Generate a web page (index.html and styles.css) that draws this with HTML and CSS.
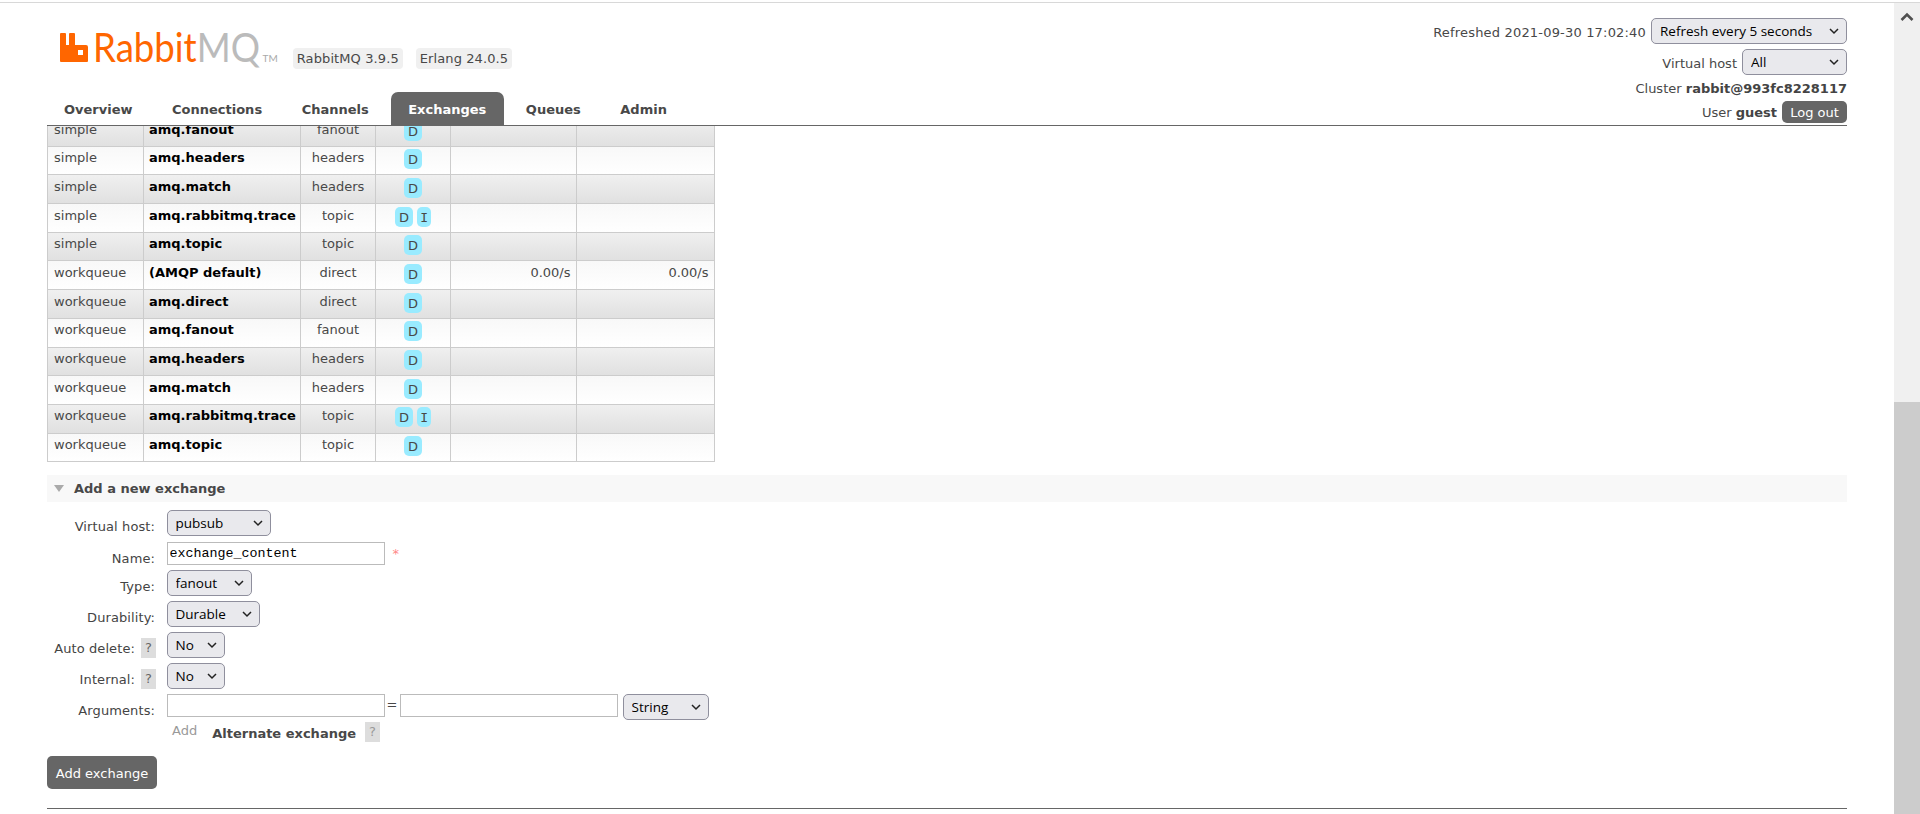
FILE: index.html
```html
<!DOCTYPE html>
<html lang="en">
<head>
<meta charset="utf-8">
<title>RabbitMQ Management</title>
<link rel="stylesheet" href="styles.css">
</head>
<body>
<div class="page">
  <div class="content">
    <header class="header">
      <div class="brand-col">
        <div class="brand">
          <svg class="logo-icon" viewBox="0 0 28 29" width="28" height="29" aria-hidden="true"><path fill="#f60" fill-rule="evenodd" d="M1 0h4a1 1 0 0 1 1 1v11h3V1a1 1 0 0 1 1-1h4a1 1 0 0 1 1 1v11h11a2 2 0 0 1 2 2v14a1 1 0 0 1-1 1H1a1 1 0 0 1-1-1V1a1 1 0 0 1 1-1zM18 17v5h5v-5z"/></svg>
          <span class="logo-text"><span class="logo-rabbit">Rabbit</span><span class="logo-mq">MQ</span></span>
          <span class="logo-tm">TM</span>
          <span class="pill pill-first">RabbitMQ 3.9.5</span>
          <span class="pill">Erlang 24.0.5</span>
        </div>
        <nav class="tabs">
          <a class="tab">Overview</a>
          <a class="tab">Connections</a>
          <a class="tab">Channels</a>
          <a class="tab tab-active">Exchanges</a>
          <a class="tab">Queues</a>
          <a class="tab">Admin</a>
        </nav>
      </div>
      <div class="status">
        <div class="status-row status-refresh">
          <span class="status-text">Refreshed 2021-09-30 17:02:40</span>
          <select class="sel sel-refresh"><option>Refresh every 5 seconds</option></select>
        </div>
        <div class="status-row status-vhost">
          <span class="status-text">Virtual host</span>
          <select class="sel sel-vhost"><option>All</option></select>
        </div>
        <div class="status-row status-cluster"><span class="status-text">Cluster <b>rabbit@993fc8228117</b></span></div>
        <div class="status-row status-user">
          <span class="status-text">User <b>guest</b></span>
          <button class="logout" type="button">Log out</button>
        </div>
      </div>
    </header>

    <main class="main">
      <table class="list">
        <colgroup>
          <col class="c1"><col class="c2"><col class="c3"><col class="c4"><col class="c5"><col class="c6">
        </colgroup>
        <tbody>
          <tr class="alt1"><td>simple</td><td class="name">amq.fanout</td><td class="ctr">fanout</td><td class="ctr"><span class="tag">D</span></td><td></td><td></td></tr>
          <tr class="alt2"><td>simple</td><td class="name">amq.headers</td><td class="ctr">headers</td><td class="ctr"><span class="tag">D</span></td><td></td><td></td></tr>
          <tr class="alt1"><td>simple</td><td class="name">amq.match</td><td class="ctr">headers</td><td class="ctr"><span class="tag">D</span></td><td></td><td></td></tr>
          <tr class="alt2"><td>simple</td><td class="name">amq.rabbitmq.trace</td><td class="ctr">topic</td><td class="ctr"><span class="tag">D</span> <span class="tag tag-i">I</span></td><td></td><td></td></tr>
          <tr class="alt1"><td>simple</td><td class="name">amq.topic</td><td class="ctr">topic</td><td class="ctr"><span class="tag">D</span></td><td></td><td></td></tr>
          <tr class="alt2"><td>workqueue</td><td class="name">(AMQP default)</td><td class="ctr">direct</td><td class="ctr"><span class="tag">D</span></td><td class="num">0.00/s</td><td class="num">0.00/s</td></tr>
          <tr class="alt1"><td>workqueue</td><td class="name">amq.direct</td><td class="ctr">direct</td><td class="ctr"><span class="tag">D</span></td><td></td><td></td></tr>
          <tr class="alt2"><td>workqueue</td><td class="name">amq.fanout</td><td class="ctr">fanout</td><td class="ctr"><span class="tag">D</span></td><td></td><td></td></tr>
          <tr class="alt1"><td>workqueue</td><td class="name">amq.headers</td><td class="ctr">headers</td><td class="ctr"><span class="tag">D</span></td><td></td><td></td></tr>
          <tr class="alt2"><td>workqueue</td><td class="name">amq.match</td><td class="ctr">headers</td><td class="ctr"><span class="tag">D</span></td><td></td><td></td></tr>
          <tr class="alt1"><td>workqueue</td><td class="name">amq.rabbitmq.trace</td><td class="ctr">topic</td><td class="ctr"><span class="tag">D</span> <span class="tag tag-i">I</span></td><td></td><td></td></tr>
          <tr class="alt2"><td>workqueue</td><td class="name">amq.topic</td><td class="ctr">topic</td><td class="ctr"><span class="tag">D</span></td><td></td><td></td></tr>
        </tbody>
      </table>

      <section class="section">
        <h2 class="section-title"><span class="triangle"></span>Add a new exchange</h2>
        <form class="form">
          <div class="row row-first">
            <label class="lbl">Virtual host:</label>
            <select class="sel sel-w-vhost"><option>pubsub</option></select>
          </div>
          <div class="row row-name">
            <label class="lbl">Name:</label>
            <input class="field" type="text" value="exchange_content">
            <span class="req">*</span>
          </div>
          <div class="row">
            <label class="lbl">Type:</label>
            <select class="sel sel-w-type"><option>fanout</option></select>
          </div>
          <div class="row">
            <label class="lbl">Durability:</label>
            <select class="sel sel-w-dur"><option>Durable</option></select>
          </div>
          <div class="row">
            <label class="lbl lbl-help">Auto delete:<span class="help">?</span></label>
            <select class="sel sel-w-no"><option>No</option></select>
          </div>
          <div class="row">
            <label class="lbl lbl-help">Internal:<span class="help">?</span></label>
            <select class="sel sel-w-no"><option>No</option></select>
          </div>
          <div class="row row-args">
            <label class="lbl">Arguments:</label>
            <input class="field" type="text">
            <span class="eq">=</span>
            <input class="field" type="text">
            <select class="sel sel-w-str"><option>String</option></select>
          </div>
          <div class="row row-add">
            <span class="add-link">Add</span>
            <span class="alt-ex">Alternate exchange</span>
            <span class="help help-alt">?</span>
          </div>
          <button class="submit" type="button">Add exchange</button>
        </form>
      </section>
      <hr class="rule">
    </main>
  </div>
  <aside class="scrollbar">
    <svg class="scroll-up" viewBox="0 0 14 10" width="14" height="10" aria-hidden="true"><path d="M1.5 8L7 2.5 12.5 8" fill="none" stroke="#505050" stroke-width="2.6"/></svg>
    <div class="scroll-thumb"></div>
  </aside>
</div>
</body>
</html>
```

FILE: styles.css
```css
* { box-sizing: border-box; }
html, body { margin: 0; height: 100%; overflow: hidden; background: #fff; }
body {
  font-family: "DejaVu Sans", Verdana, sans-serif;
  font-size: 13px;
  color: #484848;
}
.page {
  display: flex;
  height: 814px;
  margin-top: 2px;
  border-top: 1px solid #d8d8d8;
}
.content {
  flex: 1;
  min-width: 0;
  display: flex;
  flex-direction: column;
  padding: 0 47px;
}
.header {
  flex: none;
  height: 123px;
  display: flex;
  justify-content: space-between;
  border-bottom: 1px solid #666;
}
.brand-col {
  display: flex;
  flex-direction: column;
  justify-content: space-between;
}
.brand {
  display: flex;
  align-items: flex-start;
  padding: 30px 0 0 13px;
}
.logo-icon { flex: none; }
.logo-text {
  font-family: Lato, sans-serif;
  font-size: 40px;
  line-height: 29px;
  margin-left: 5px;
  margin-right: -14px;
  white-space: nowrap;
  transform: scaleX(0.915);
  transform-origin: left center;
}
.logo-rabbit { color: #f60; }
.logo-mq { color: #bbb; }
.logo-tm {
  font-family: Lato, sans-serif;
  font-size: 10px;
  line-height: 10px;
  color: #aaa;
  margin: 20px 0 0 1px;
}
.pill {
  background: #f0f0f0;
  border-radius: 4px;
  height: 21px;
  line-height: 21px;
  padding: 0 4px;
  margin: 15px 0 0 13px;
  letter-spacing: 0.1px;
  white-space: nowrap;
}
.pill-first { margin-left: 15px; }
.tabs {
  display: flex;
  gap: 4.5px;
  margin-left: -0.5px;
}
.tab {
  height: 33px;
  line-height: 36px;
  padding: 0 17.5px;
  font-weight: bold;
  color: #484848;
  white-space: nowrap;
}
.tab-active {
  background: #666;
  color: #fff;
  border-radius: 7px 7px 0 0;
}
.status {
  display: flex;
  flex-direction: column;
  align-items: flex-end;
}
.status-row {
  display: flex;
  align-items: center;
  gap: 5px;
  white-space: nowrap;
}
.status-text { padding-top: 1px; }
.status-refresh { margin-top: 15px; height: 26px; }
.status-refresh .status-text { padding-top: 2px; letter-spacing: 0.18px; }
.status-vhost { margin-top: 5px; height: 26px; }
.status-vhost .status-text { padding-top: 2px; }
.status-cluster { margin-top: 3px; height: 20px; }
.status-user { margin-top: 3px; height: 22px; }
.status b { color: #444; }
.sel {
  appearance: none;
  -webkit-appearance: none;
  display: block;
  flex: none;
  height: 26px;
  margin: 0;
  padding: 0 20px 0 8px;
  border: 1px solid #8f8f9d;
  border-radius: 5px;
  background-color: #e9e9ed;
  background-image: url("data:image/svg+xml,%3Csvg xmlns='http://www.w3.org/2000/svg' width='10' height='7'%3E%3Cpath d='M1 1l4 4 4-4' fill='none' stroke='%23222' stroke-width='1.5'/%3E%3C/svg%3E");
  background-repeat: no-repeat;
  background-position: right 7px center;
  font-family: "Open Sans", "Liberation Sans", sans-serif;
  font-size: 13.5px;
  color: #000;
}
.sel-refresh { width: 196px; }
.sel-vhost { width: 105px; }
.sel-w-vhost { width: 104px; }
.sel-w-type { width: 85px; }
.sel-w-dur { width: 93px; }
.sel-w-no { width: 58px; }
.sel-w-str { width: 86px; margin-left: 5px; }
.logout {
  height: 22px;
  width: 65px;
  padding: 0;
  border: 0;
  border-radius: 5px;
  background: #666;
  color: #fff;
  font: inherit;
}
.main {
  flex: 1;
  min-height: 0;
  overflow: hidden;
}
.list {
  table-layout: fixed;
  width: 667px;
  margin-top: -9px;
  border-collapse: collapse;
}
.c1 { width: 96px; }
.c2 { width: 157px; }
.c3 { width: 75px; }
.c4 { width: 75px; }
.c5 { width: 126px; }
.c6 { width: 138px; }
.list td {
  height: 28.7px;
  padding: 2.5px 6px 0;
  border: 1px solid #ccc;
  vertical-align: top;
  white-space: nowrap;
  line-height: 18px;
}
.alt1 { background: linear-gradient(to bottom, #f0f0f0, #e0e0e0); }
.alt2 { background: linear-gradient(to bottom, #f8f8f8, #fff); }
.list td.name { font-weight: bold; color: #000; padding-left: 5px; padding-right: 0; }
.list td.ctr { text-align: center; }
.list td.num { text-align: right; padding-right: 5.5px; }
.tag {
  display: inline-block;
  min-width: 18px;
  height: 20px;
  line-height: 22px;
  border-radius: 5px;
  background: #99ebff;
  text-align: center;
  vertical-align: top;
}
.tag-i { font-family: "DejaVu Sans Mono", monospace; min-width: 14px; }
.section { margin-top: 13px; }
.section-title {
  display: flex;
  align-items: center;
  height: 27px;
  margin: 0;
  padding-left: 7px;
  background: #f8f8f8;
  font-size: 13px;
  font-weight: bold;
  color: #484848;
}
.triangle {
  width: 0;
  height: 0;
  border-style: solid;
  border-width: 7px 5.5px 0;
  border-color: #aaa transparent transparent;
  margin-right: 10px;
}
.form { display: block; }
.row {
  display: flex;
  align-items: flex-start;
  height: 26px;
  margin-top: 5px;
}
.row-first { margin-top: 8px; }
.row-name { margin-top: 6px; height: 23px; }
.lbl {
  flex: none;
  width: 108px;
  margin-right: 11.5px;
  padding-top: 8px;
  line-height: 18px;
  text-align: right;
  color: #444;
  letter-spacing: 0.1px;
  white-space: nowrap;
}
.lbl-help {
  display: flex;
  justify-content: flex-end;
  gap: 6px;
}
.help {
  display: block;
  width: 15px;
  height: 20px;
  line-height: 20px;
  margin-top: -2px;
  margin-right: -1px;
  background: #ddd;
  text-align: center;
  color: #666;
}
.field {
  display: block;
  flex: none;
  width: 218px;
  height: 23px;
  margin: 0;
  padding: 1px 2px;
  border: 1px solid #bbb;
  background: #fff;
  font-family: "Liberation Mono", monospace;
  font-size: 13.33px;
  color: #000;
  outline: none;
}
.req {
  margin-left: 8px;
  margin-top: 4px;
  color: #f88;
  font-size: 13px;
  line-height: 16px;
}
.eq {
  width: 15px;
  text-align: center;
  line-height: 22px;
}
.row-add {
  height: 21px;
  margin-top: 2px;
  padding-left: 125px;
}
.add-link { color: #999; line-height: 18px; margin-top: 0; }
.alt-ex { font-weight: bold; color: #484848; margin-left: 15px; line-height: 18px; margin-top: 3px; }
.help-alt { margin: 0 0 0 9px; color: #999; }
.submit {
  display: block;
  width: 110px;
  height: 33px;
  margin-top: 13px;
  padding: 1px 0 0;
  border: 0;
  border-radius: 5px;
  background: #666;
  color: #fff;
  font: inherit;
}
.rule {
  margin: 19px 0 0;
  border: 0;
  border-top: 1px solid #666;
}
.scrollbar {
  flex: none;
  width: 26px;
  position: relative;
  background: #f0f0f0;
}
.scroll-up {
  position: absolute;
  top: 9px;
  left: 6px;
}
.scroll-thumb {
  position: absolute;
  top: 399px;
  left: 0;
  right: 0;
  bottom: 0;
  background: #ccc;
}
```
